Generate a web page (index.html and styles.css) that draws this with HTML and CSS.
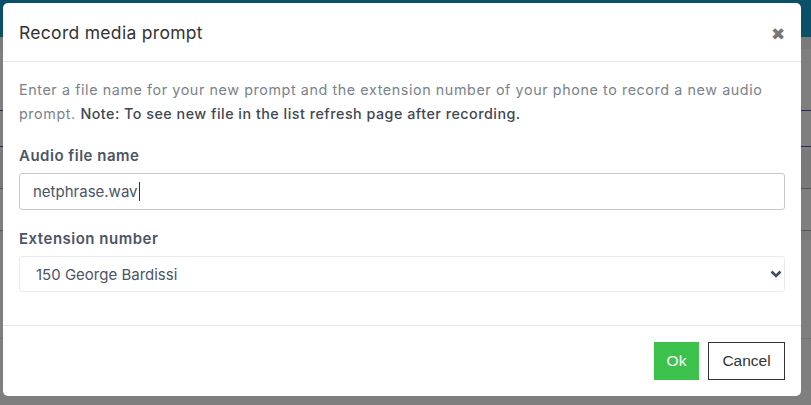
FILE: index.html
```html
<!DOCTYPE html>
<html>
<head>
<meta charset="utf-8">
<link rel="stylesheet" href="styles.css">
</head>
<body>
<div class="page">
  <div class="topbar"></div>
  <div class="band1"></div>
  <div class="gap1"></div>
  <div class="searchbox"></div>
  <div class="band2"></div>
  <div class="row row1"></div>
  <div class="row row2"></div>
  <div class="row row3"></div>
</div>
<div class="overlay">
  <div class="modal">
    <div class="modal-header">
      <h5 class="modal-title">Record media prompt</h5>
      <span class="close">&#x2716;</span>
    </div>
    <div class="modal-body">
      <p class="intro">Enter a file name for your new prompt and the extension number of your phone to record a new audio prompt. <span class="note">Note: To see new file in the list refresh page after recording.</span></p>
      <label class="label">Audio file name</label>
      <div class="input"><span>netphrase.wav</span><span class="caret"></span></div>
      <label class="label">Extension number</label>
      <div class="select"><span>150 George Bardissi</span>
        <svg class="chev" width="12" height="8" viewBox="0 0 12 8"><path d="M1.5 1.5 L6 6 L10.5 1.5" fill="none" stroke="#404a5e" stroke-width="2.6"/></svg>
      </div>
    </div>
    <div class="modal-footer">
      <button class="btn btn-ok">Ok</button>
      <button class="btn btn-cancel">Cancel</button>
    </div>
  </div>
</div>
</body>
</html>
```
FILE: styles.css
```css
* { box-sizing: border-box; }
html, body { margin: 0; padding: 0; }
body {
  width: 811px; height: 405px; overflow: hidden;
  font-family: "Inter", "Noto Sans", sans-serif;
  background: #ffffff;
  position: relative;
}
.page { display: flex; flex-direction: column; }
.topbar { height: 37px; background: #17a0d0; }
.band1 { height: 12px; background: #f4f4f4; }
.gap1 { height: 61px; }
.searchbox { height: 37px; border-top: 1px solid #5a50c8; border-bottom: 1px solid #5a50c8; }
.band2 { height: 3px; }
.row1 { height: 39px; background: #f3f3f3; border-bottom: 1px solid #aaa; }
.row2 { height: 42px; border-bottom: 1px solid #aaa; background: #fff; }
.row3 { height: 150px; background: linear-gradient(#f4f4f4 0 9px, #fff 9px 107px, #e4e4e4 107px 108px, #fff 108px 150px, #e4e4e4 150px); }
.overlay {
  position: absolute; inset: 0;
  background: rgba(0,0,0,0.5);
}
.modal {
  position: absolute; left: 3px; top: 3px;
  width: 798px; height: 393px;
  background: #fff; border-radius: 5px;
  display: flex; flex-direction: column;
}
.modal-header {
  height: 59px; border-bottom: 1px solid #e6e6e6;
  display: flex; align-items: center; justify-content: space-between;
  padding: 0 16px 0 16px;
}
.modal-title {
  margin: 0; font-weight: 400; font-size: 17.5px; color: #333;
  letter-spacing: 0.3px;
}
.close { color: #777; font-size: 17px; margin-top: 3px; }
.modal-body { padding: 16px 16px 0 16px; flex: 1; }
.intro {
  margin: 0 0 21px 0; font-size: 14.3px; line-height: 24px; color: #7a828c;
  letter-spacing: 0.6px;
}
.note { color: #3f4852; font-weight: 450; letter-spacing: 0.5px; }
.label {
  display: block; font-weight: 600; font-size: 15px; color: #4b5567;
  margin-bottom: 8px; line-height: 18px; letter-spacing: 0.5px;
}
.input {
  height: 37px; border: 1px solid #c8c8c8; border-radius: 3px;
  display: flex; align-items: center; padding-left: 13px;
  font-size: 15px; color: #4a5568; margin-bottom: 20px;
}
.caret { display: inline-block; width: 1px; height: 19px; background: #333; margin-left: 1px; }
.select {
  height: 36px; border: 1px solid #e9ebee; border-radius: 3px;
  display: flex; align-items: center; justify-content: space-between;
  padding: 0 2px 0 16px; font-size: 15px; color: #4a5568;
}
.modal-footer {
  height: 71px; border-top: 1px solid #e6e6e6;
  display: flex; align-items: center; justify-content: flex-end;
  padding: 0 16px 0 0; gap: 9px;
}
.btn {
  font-family: "Liberation Sans", Arial, sans-serif; font-size: 15.5px;
  height: 38px; border-radius: 0; cursor: pointer;
}
.btn-ok { width: 45px; background: #3dc14d; color: #fff; border: none; }
.btn-cancel { width: 77px; background: #fff; color: #333; border: 1px solid #333; }
```
